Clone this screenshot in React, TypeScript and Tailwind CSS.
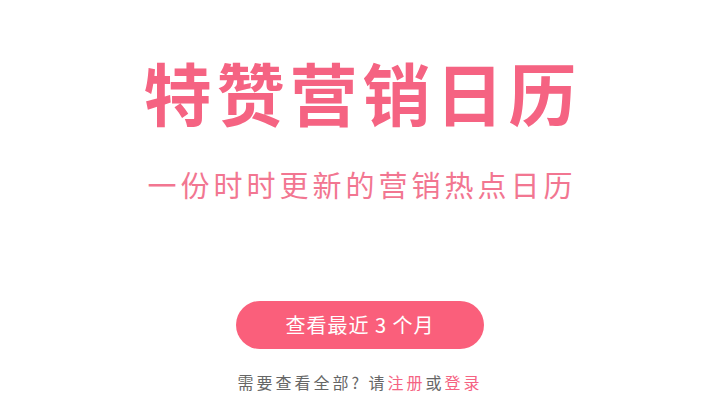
export default function App() {
  const cjk = { fontFamily: '"Noto Sans CJK SC", "Noto Sans", sans-serif' };
  return (
    <div className="w-[720px] h-[415px] bg-white flex flex-col items-center overflow-hidden" style={cjk}>
      <h1 className="mt-[50px] text-[68px] leading-[84px] font-bold tracking-[5px] text-[#f56382] pl-[5px]">特赞营销日历</h1>
      <p className="mt-[30px] text-[29px] leading-[40px] tracking-[4px] text-[#f27691] pl-[4px]">一份时时更新的营销热点日历</p>
      <button className="mt-[97px] w-[248px] h-[48px] rounded-full bg-[#fa5f7b] text-white text-[20px] tracking-[1px]">查看最近 3 个月</button>
      <p className="mt-[22px] text-[16px] leading-[22px] tracking-[3px] text-[#666666]">
        需要查看全部? 请<span className="text-[#f56382]">注册</span>或<span className="text-[#f56382]">登录</span>
      </p>
    </div>
  );
}
